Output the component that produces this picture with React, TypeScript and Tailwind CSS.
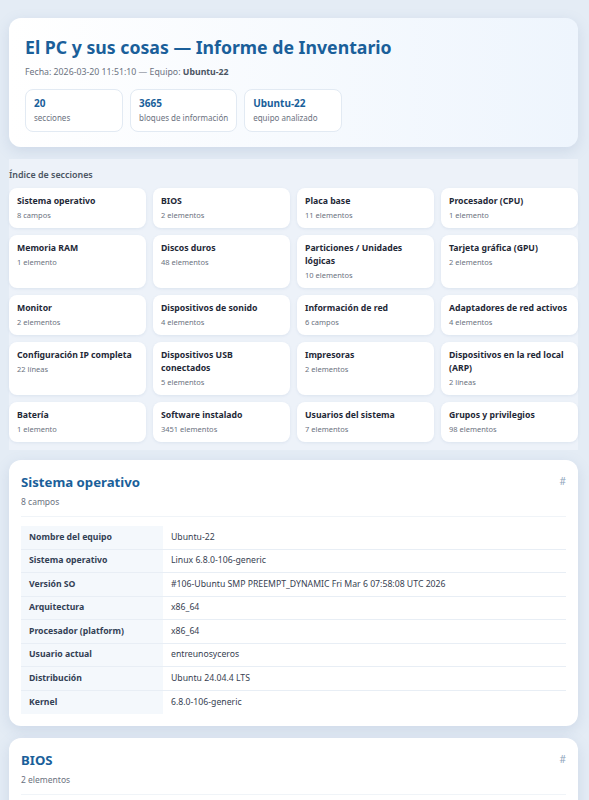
import React from "react";

const index: [string, string][] = [
  ["Sistema operativo", "8 campos"],
  ["BIOS", "2 elementos"],
  ["Placa base", "11 elementos"],
  ["Procesador (CPU)", "1 elemento"],
  ["Memoria RAM", "1 elemento"],
  ["Discos duros", "48 elementos"],
  ["Particiones / Unidades lógicas", "10 elementos"],
  ["Tarjeta gráfica (GPU)", "2 elementos"],
  ["Monitor", "2 elementos"],
  ["Dispositivos de sonido", "4 elementos"],
  ["Información de red", "6 campos"],
  ["Adaptadores de red activos", "4 elementos"],
  ["Configuración IP completa", "22 líneas"],
  ["Dispositivos USB conectados", "5 elementos"],
  ["Impresoras", "2 elementos"],
  ["Dispositivos en la red local (ARP)", "2 líneas"],
  ["Batería", "1 elemento"],
  ["Software instalado", "3451 elementos"],
  ["Usuarios del sistema", "7 elementos"],
  ["Grupos y privilegios", "98 elementos"],
];

const rows: [string, string][] = [
  ["Nombre del equipo", "Ubuntu-22"],
  ["Sistema operativo", "Linux 6.8.0-106-generic"],
  ["Versión SO", "#106-Ubuntu SMP PREEMPT_DYNAMIC Fri Mar 6 07:58:08 UTC 2026"],
  ["Arquitectura", "x86_64"],
  ["Procesador (platform)", "x86_64"],
  ["Usuario actual", "entreunosyceros"],
  ["Distribución", "Ubuntu 24.04.4 LTS"],
  ["Kernel", "6.8.0-106-generic"],
];

function Stat({ n, label }: { n: string; label: string }) {
  return (
    <div className="min-w-[98px] rounded-[8px] border border-[#e2eaf3] bg-white px-[8px] pt-[6px] pb-[7px]">
      <div className="text-[10px] font-bold leading-[14px] text-[#1a5f9a]">{n}</div>
      <div className="mt-[2px] text-[8px] leading-[12px] text-[#6b7280]">{label}</div>
    </div>
  );
}

export default function App() {
  return (
    <div
      className="min-h-[800px] w-full bg-[#e4ecf5] pt-[18px] pb-[20px]"
      style={{ fontFamily: '"Noto Sans", "Open Sans", sans-serif' }}
    >
      <div className="ml-[9px] w-[569px]">
        {/* Header */}
        <div className="rounded-[12px] bg-gradient-to-r from-white to-[#eef5fd] px-[16px] pt-[17px] pb-[15px] shadow-[0_4px_14px_rgba(100,130,170,0.18)]">
          <h1 className="text-[17.7px] font-bold leading-[24px] text-[#1a5f9a]">
            El PC y sus cosas — Informe de Inventario
          </h1>
          <div className="mt-[7px] text-[8.75px] leading-[12px] text-[#6b7280]">
            Fecha: 2026-03-20 11:51:10 — Equipo: <span className="font-bold text-[#4b5563]">Ubuntu-22</span>
          </div>
          <div className="mt-[11px] flex gap-[7px]">
            <Stat n="20" label="secciones" />
            <Stat n="3665" label="bloques de información" />
            <Stat n="Ubuntu-22" label="equipo analizado" />
          </div>
        </div>

        {/* Index */}
        <div className="mt-[12px] bg-[#edf2f9] pt-[10px] pb-[8px]">
          <div className="mb-[7px] text-[8.9px] font-semibold leading-[12px] text-[#4b5563]">Índice de secciones</div>
          <div className="grid grid-cols-4 gap-[7px]">
            {index.map(([t, s]) => (
              <div
                key={t}
                className="rounded-[8px] bg-white pl-[8px] pr-[8px] pt-[7px] pb-[6px] shadow-[0_1px_3px_rgba(100,130,170,0.12)]"
              >
                <div className="text-[8.7px] font-bold leading-[13px] text-[#1f2937]">{t}</div>
                <div className="text-[7.5px] leading-[14px] text-[#6b7280]">{s}</div>
              </div>
            ))}
          </div>
        </div>

        {/* Sistema operativo */}
        <div className="mt-[10px] rounded-[12px] bg-white px-[12px] pt-[13px] pb-[12px] shadow-[0_4px_14px_rgba(100,130,170,0.18)]">
          <div className="border-b border-[#f0f4f8] pb-[8px]">
            <div className="flex items-start justify-between">
              <h2 className="text-[13.2px] font-bold leading-[18px] text-[#1a5f9a]">Sistema operativo</h2>
              <span className="mt-[2px] text-[10px] leading-[12px] text-[#8ea4bb]">#</span>
            </div>
            <div className="mt-[5px] text-[8.5px] leading-[12px] text-[#6b7280]">8 campos</div>
          </div>
          <div className="mt-[9px]">
            {rows.map(([k, v], i) => (
              <div
                key={k}
                className={`grid h-[23.5px] grid-cols-[142px_1fr] ${i < rows.length - 1 ? "border-b border-[#e8eef5]" : ""}`}
              >
                <div className="flex items-center bg-[#f4f8fc] pl-[8px] text-[8.7px] font-bold text-[#334155]">{k}</div>
                <div className="flex items-center pl-[8px] text-[8.7px] text-[#374151]">{v}</div>
              </div>
            ))}
          </div>
        </div>

        {/* BIOS */}
        <div className="mt-[12px] rounded-[12px] bg-white px-[12px] pt-[13px] pb-[12px] shadow-[0_4px_14px_rgba(100,130,170,0.18)]">
          <div className="border-b border-[#f0f4f8] pb-[8px]">
            <div className="flex items-start justify-between">
              <h2 className="text-[13.2px] font-bold leading-[18px] text-[#1a5f9a]">BIOS</h2>
              <span className="mt-[2px] text-[10px] leading-[12px] text-[#8ea4bb]">#</span>
            </div>
            <div className="mt-[5px] text-[8.5px] leading-[12px] text-[#6b7280]">2 elementos</div>
          </div>
          <div className="h-[60px]" />
        </div>
      </div>
    </div>
  );
}
